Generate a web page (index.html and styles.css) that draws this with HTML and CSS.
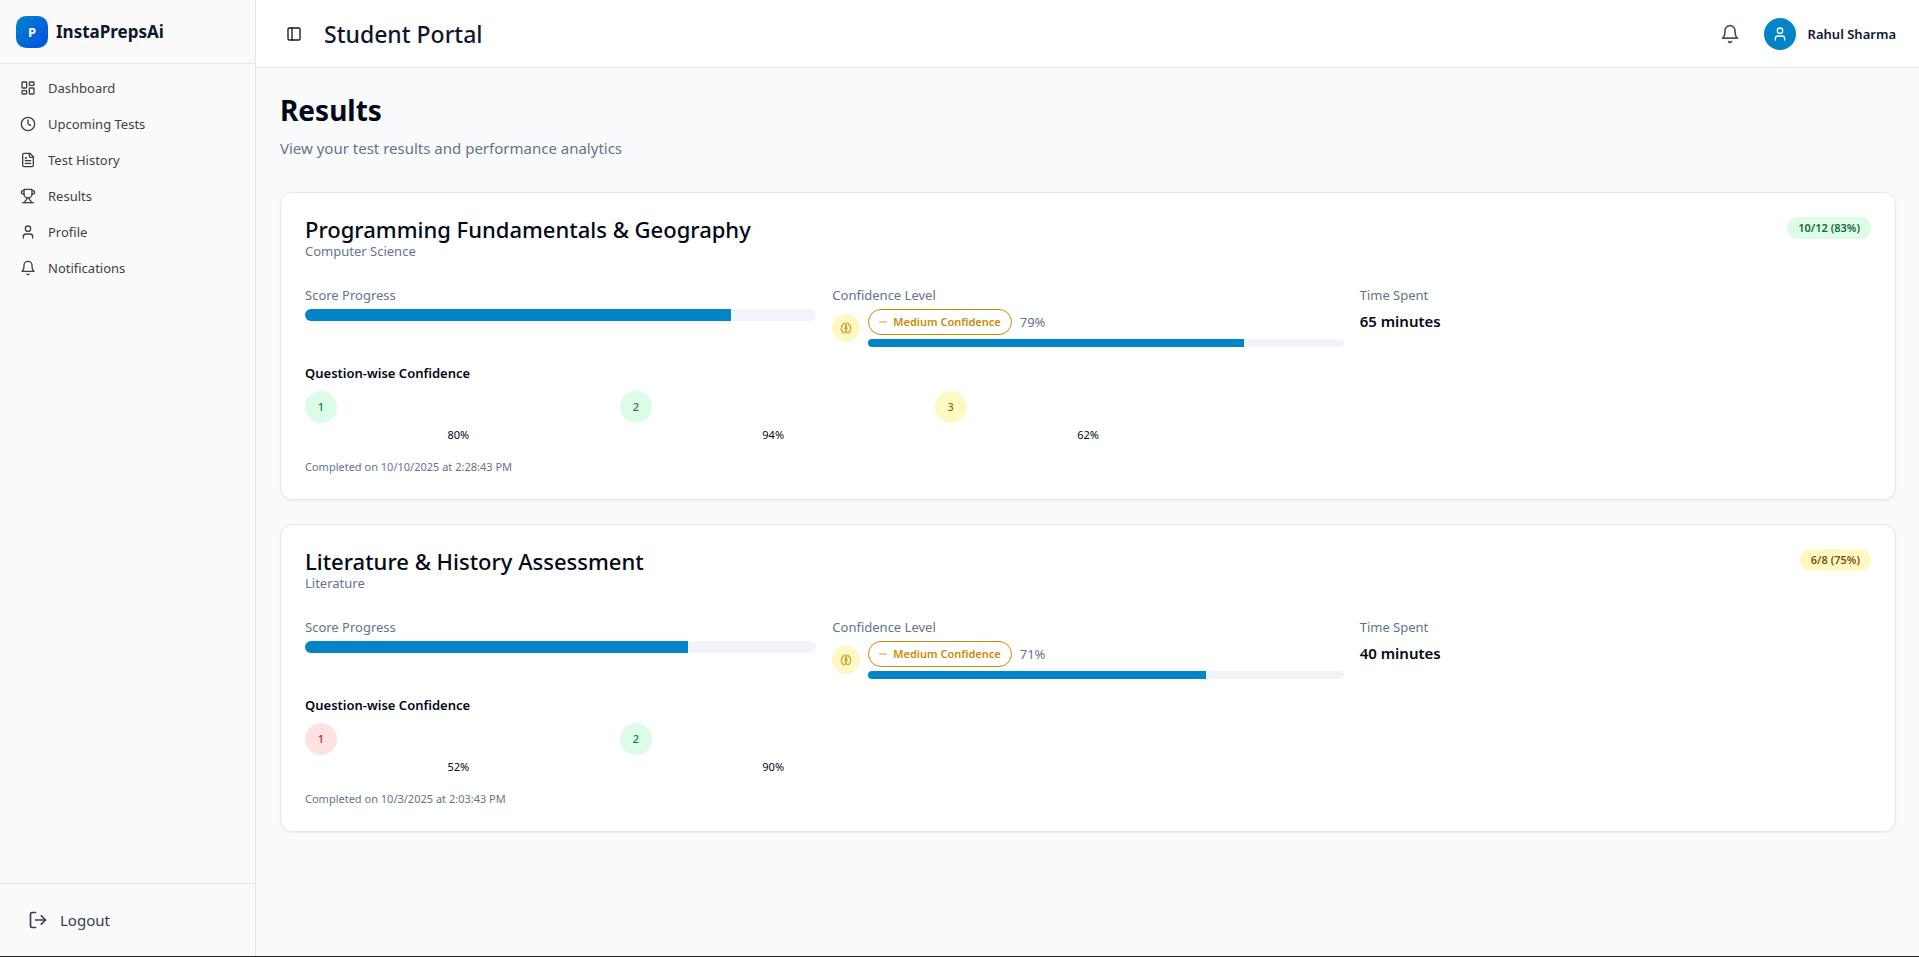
FILE: index.html
```html
<!DOCTYPE html>
<html lang="en">
<head>
<meta charset="utf-8">
<title>Results - InstaPrepsAi</title>
<link rel="stylesheet" href="styles.css">
</head>
<body>
<svg class="sprite" aria-hidden="true">
  <symbol id="bell" viewBox="0 0 24 24"><path d="M6 8a6 6 0 0 1 12 0c0 7 3 9 3 9H3s3-2 3-9"/><path d="M10.3 21a1.94 1.94 0 0 0 3.4 0"/></symbol>
  <symbol id="user" viewBox="0 0 24 24"><path d="M19 21v-2a4 4 0 0 0-4-4H9a4 4 0 0 0-4 4v2"/><circle cx="12" cy="7" r="4"/></symbol>
  <symbol id="minus" viewBox="0 0 24 24"><path d="M5 12h14"/></symbol>
  <symbol id="brain" viewBox="0 0 24 24"><path d="M12 5a3 3 0 1 0-5.997.125 4 4 0 0 0-2.526 5.77 4 4 0 0 0 .556 6.588A4 4 0 1 0 12 18Z"/><path d="M12 5a3 3 0 1 1 5.997.125 4 4 0 0 1 2.526 5.77 4 4 0 0 1-.556 6.588A4 4 0 1 1 12 18Z"/><path d="M15 13a4.5 4.5 0 0 1-3-4 4.5 4.5 0 0 1-3 4"/><path d="M17.599 6.5a3 3 0 0 0 .399-1.375"/><path d="M6.003 5.125A3 3 0 0 0 6.401 6.5"/><path d="M3.477 10.896a4 4 0 0 1 .585-.396"/><path d="M19.938 10.5a4 4 0 0 1 .585.396"/><path d="M6 18a4 4 0 0 1-1.967-.516"/><path d="M19.967 17.484A4 4 0 0 1 18 18"/></symbol>
</svg>
<div class="app">
  <aside class="sidebar">
    <div class="brand"><span class="brand-mark">P</span><span class="brand-name">InstaPrepsAi</span></div>
    <nav class="nav" aria-label="Main">
      <a href="#dashboard"><svg class="icon" viewBox="0 0 24 24"><rect width="7" height="9" x="3" y="3" rx="1"/><rect width="7" height="5" x="14" y="3" rx="1"/><rect width="7" height="9" x="14" y="12" rx="1"/><rect width="7" height="5" x="3" y="16" rx="1"/></svg>Dashboard</a>
      <a href="#upcoming"><svg class="icon" viewBox="0 0 24 24"><circle cx="12" cy="12" r="10"/><path d="M12 6v6l4 2"/></svg>Upcoming Tests</a>
      <a href="#history"><svg class="icon" viewBox="0 0 24 24"><path d="M15 2H6a2 2 0 0 0-2 2v16a2 2 0 0 0 2 2h12a2 2 0 0 0 2-2V7Z"/><path d="M14 2v4a2 2 0 0 0 2 2h4"/><path d="M10 9H8"/><path d="M16 13H8"/><path d="M16 17H8"/></svg>Test History</a>
      <a href="#results"><svg class="icon" viewBox="0 0 24 24"><path d="M6 9H4.500a2.500 2.500 0 0 1 0-5H6"/><path d="M18 9h1.500a2.500 2.500 0 0 0 0-5H18"/><path d="M4 22h16"/><path d="M10 14.660V17c0 .55-.47.98-.97 1.210C7.850 18.750 7 20.240 7 22"/><path d="M14 14.660V17c0 .55.47.98.97 1.210C16.150 18.750 17 20.240 17 22"/><path d="M18 2H6v7a6 6 0 0 0 12 0V2Z"/></svg>Results</a>
      <a href="#profile"><svg class="icon"><use href="#user"/></svg>Profile</a>
      <a href="#notifications"><svg class="icon"><use href="#bell"/></svg>Notifications</a>
    </nav>
    <div class="sidebar-foot">
      <button type="button" class="logout"><svg class="icon icon-lg" viewBox="0 0 24 24"><path d="M9 21H5a2 2 0 0 1-2-2V5a2 2 0 0 1 2-2h4"/><path d="m16 17 5-5-5-5"/><path d="M21 12H9"/></svg>Logout</button>
    </div>
  </aside>
  <div class="page">
    <header class="topbar">
      <button type="button" class="toggle" aria-label="Toggle sidebar"><svg class="icon" viewBox="0 0 24 24"><rect width="18" height="18" x="3" y="3" rx="2"/><path d="M9 3v18"/></svg></button>
      <div class="portal">Student Portal</div>
      <button type="button" class="alerts" aria-label="Notifications"><svg class="icon icon-lg"><use href="#bell"/></svg></button>
      <div class="account"><span class="avatar"><svg class="icon"><use href="#user"/></svg></span><span>Rahul Sharma</span></div>
    </header>
    <main class="content">
      <div class="intro">
        <h1>Results</h1>
        <p>View your test results and performance analytics</p>
      </div>

      <article class="card">
        <div class="card-head">
          <div><h2>Programming Fundamentals &amp; Geography</h2><p class="muted">Computer Science</p></div>
          <span class="score green">10/12 (83%)</span>
        </div>
        <div class="stats">
          <div><p class="muted">Score Progress</p><div class="bar"><div class="fill" style="width:83.33%"></div></div></div>
          <div><p class="muted">Confidence Level</p>
            <div class="confidence">
              <span class="brain"><svg class="icon"><use href="#brain"/></svg></span>
              <div class="level">
                <div class="level-row"><span class="pill"><svg class="icon"><use href="#minus"/></svg>Medium Confidence</span><span class="muted">79%</span></div>
                <div class="bar thin"><div class="fill" style="width:79%"></div></div>
              </div>
            </div>
          </div>
          <div><p class="muted">Time Spent</p><p class="time">65 minutes</p></div>
        </div>
        <section>
          <h3>Question-wise Confidence</h3>
          <div class="questions">
            <div><span class="number green-mid">1</span><p>80%</p></div>
            <div><span class="number green-mid">2</span><p>94%</p></div>
            <div><span class="number yellow-mid">3</span><p>62%</p></div>
          </div>
        </section>
        <p class="completed">Completed on 10/10/2025 at 2:28:43 PM</p>
      </article>

      <article class="card">
        <div class="card-head">
          <div><h2>Literature &amp; History Assessment</h2><p class="muted">Literature</p></div>
          <span class="score yellow">6/8 (75%)</span>
        </div>
        <div class="stats">
          <div><p class="muted">Score Progress</p><div class="bar"><div class="fill" style="width:75%"></div></div></div>
          <div><p class="muted">Confidence Level</p>
            <div class="confidence">
              <span class="brain"><svg class="icon"><use href="#brain"/></svg></span>
              <div class="level">
                <div class="level-row"><span class="pill"><svg class="icon"><use href="#minus"/></svg>Medium Confidence</span><span class="muted">71%</span></div>
                <div class="bar thin"><div class="fill" style="width:71%"></div></div>
              </div>
            </div>
          </div>
          <div><p class="muted">Time Spent</p><p class="time">40 minutes</p></div>
        </div>
        <section>
          <h3>Question-wise Confidence</h3>
          <div class="questions">
            <div><span class="number red-mid">1</span><p>52%</p></div>
            <div><span class="number green-mid">2</span><p>90%</p></div>
          </div>
        </section>
        <p class="completed">Completed on 10/3/2025 at 2:03:43 PM</p>
      </article>
    </main>
  </div>
</div>
</body>
</html>
```
FILE: styles.css
```css
* { box-sizing: border-box; }

body {
  margin: 0;
  font-family: "Segoe UI", "Noto Sans", "Open Sans", sans-serif;
  font-size: 13px;
  line-height: 20px;
  color: #020817;
  background: #f9fafc;
}

h1, h2, h3, p { margin: 0; }
button { padding: 0; border: 0; background: none; font: inherit; cursor: pointer; }

.sprite { display: none; }
.icon {
  width: 16px;
  height: 16px;
  flex: none;
  fill: none;
  stroke: currentColor;
  stroke-width: 2;
  stroke-linecap: round;
  stroke-linejoin: round;
}
.icon-lg { width: 20px; height: 20px; }

.app { display: flex; min-height: 100vh; border-bottom: 1px solid #1f2023; }

.sidebar {
  display: flex;
  flex-direction: column;
  width: 256px;
  flex: none;
  border-right: 1px solid #e2e8f0;
  background: #fafafa;
  color: #3f3f46;
}
.brand {
  display: flex;
  align-items: center;
  gap: 8px;
  height: 64px;
  padding: 0 16px;
  border-bottom: 1px solid #e2e8f0;
}
.brand-mark {
  display: grid;
  place-items: center;
  width: 32px;
  height: 32px;
  border-radius: 10px;
  background: linear-gradient(135deg, #0284c7, #004ee6);
  color: #fff;
  font-size: 13px;
  font-weight: 700;
}
.brand-name { font-size: 17px; font-weight: 700; color: #0f172a; }
.nav { display: flex; flex-direction: column; gap: 4px; padding: 8px; }
.nav a {
  display: flex;
  align-items: center;
  gap: 12px;
  height: 32px;
  padding: 0 12px;
  color: inherit;
  text-decoration: none;
}
.sidebar-foot { margin-top: auto; padding: 16px; border-top: 1px solid #e2e8f0; }
.logout {
  display: flex;
  align-items: center;
  gap: 12px;
  width: 100%;
  height: 40px;
  padding: 0 12px;
  font-size: 15px;
  color: #334155;
}

.page { flex: 1; min-width: 0; }
.topbar {
  display: flex;
  align-items: center;
  height: 68px;
  padding: 0 23px 0 24px;
  border-bottom: 1px solid #e2e8f0;
  background: #fff;
}
.toggle { display: grid; place-items: center; width: 28px; height: 28px; color: #0f172a; }
.portal { margin-left: 16px; font-size: 23px; line-height: 32px; font-weight: 500; color: #0f172a; }
.alerts { display: grid; place-items: center; width: 36px; height: 36px; margin-left: auto; color: #475569; }
.account { display: flex; align-items: center; gap: 12px; margin-left: 16px; font-weight: 600; color: #0f172a; }
.avatar {
  display: grid;
  place-items: center;
  width: 32px;
  height: 32px;
  border-radius: 50%;
  background: #0284c7;
  color: #fff;
}

.content { display: flex; flex-direction: column; gap: 24px; padding: 24px 23px 24px 24px; }
.intro { margin-bottom: 8px; }
.intro h1 { margin-bottom: 8px; font-size: 28px; line-height: 36px; font-weight: 700; }
.intro p { font-size: 15px; line-height: 24px; color: #64748b; }

.card {
  display: flex;
  flex-direction: column;
  gap: 16px;
  padding: 24px;
  border: 1px solid #e2e8f0;
  border-radius: 12px;
  background: #fff;
  box-shadow: 0 1px 2px rgba(0, 0, 0, 0.05);
}
.card-head { display: flex; align-items: flex-start; justify-content: space-between; margin-bottom: 8px; }
.card h2 { font-size: 22px; line-height: 24px; font-weight: 500; }
.muted { color: #64748b; }
.score { padding: 3px 11px; border-radius: 11px; font-size: 11px; line-height: 16px; font-weight: 600; }
.green { background: #dcfce7; color: #166534; }
.yellow { background: #fef9c3; color: #854d0e; }
.green-mid { background: #dcfce7; color: #15803d; }
.yellow-mid { background: #fef9c3; color: #a16207; }
.red-mid { background: #fee2e2; color: #b91c1c; }

.stats { display: grid; grid-template-columns: repeat(3, 1fr); gap: 16px; }
.bar { height: 12px; margin-top: 4px; border-radius: 6px; overflow: hidden; background: #f1f5f9; }
.thin { height: 8px; border-radius: 4px; }
.fill { height: 100%; background: #0284c7; }
.confidence { display: flex; align-items: center; gap: 8px; margin-top: 4px; }
.brain { padding: 8px; border-radius: 50%; background: #fef9c3; color: #ca8a04; }
.brain .icon, .pill .icon { display: block; width: 12px; height: 12px; }
.brain .icon { opacity: 0.9; }
.pill .icon { opacity: 0.8; }
.level { flex: 1; }
.level-row { display: flex; align-items: center; gap: 8px; }
.pill {
  display: flex;
  align-items: center;
  gap: 4px;
  padding: 4px 10px 4px 8px;
  border: 1px solid #ca8a04;
  border-radius: 13px;
  font-size: 11px;
  line-height: 16px;
  font-weight: 600;
  color: #ca8a04;
}
.time { margin-top: 4px; font-size: 15px; line-height: 24px; font-weight: 600; }

.card h3 { margin-bottom: 8px; font-size: 13px; line-height: 20px; font-weight: 600; }
.questions { display: grid; grid-template-columns: repeat(5, 1fr); gap: 8px; font-size: 11px; line-height: 16px; }
.questions p { margin-top: 4px; text-align: center; }
.number {
  display: grid;
  place-items: center;
  width: 32px;
  height: 32px;
  border-radius: 50%;
  font-size: 11px;
  font-weight: 500;
}
.completed { font-size: 11px; line-height: 16px; color: #64748b; }
```
